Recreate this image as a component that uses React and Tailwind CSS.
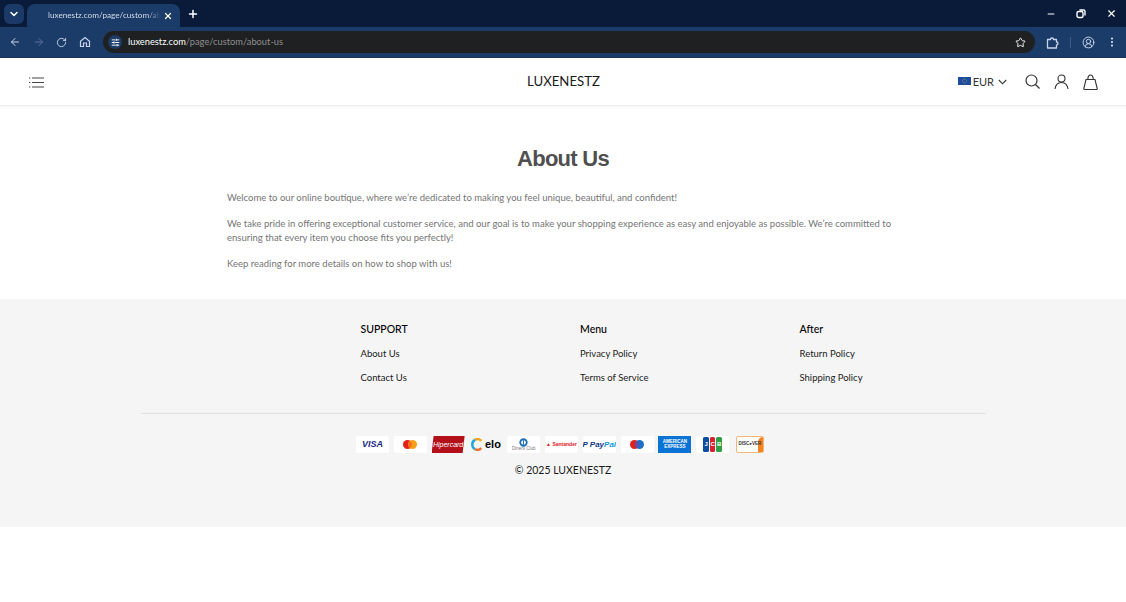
import React from "react";
import { ChevronDown, X, Plus, ArrowLeft, ArrowRight, RotateCw, Star, CircleUserRound, EllipsisVertical, Minus, SlidersHorizontal } from "lucide-react";

const avenir = "font-['Lato','Noto_Sans',sans-serif]";

function Badge({ children, className = "bg-white" }) {
  return <div className={`w-[33px] h-[17px] rounded-[2px] flex items-center justify-center overflow-hidden shrink-0 ${className}`}>{children}</div>;
}

function Cards() {
  return (
    <div className="flex gap-[4.8px] justify-center pr-[3px]">
      <Badge><span className="font-['Liberation_Sans',sans-serif] font-bold italic text-[9px] text-[#1a2a80] leading-none">VISA</span></Badge>
      <Badge>
        <svg width="14" height="9" viewBox="0 0 14 9"><circle cx="4.5" cy="4.5" r="4.5" fill="#e2211c" /><circle cx="9.5" cy="4.5" r="4.5" fill="#f79e1b" /><path d="M7 .9a4.5 4.5 0 0 1 0 7.2a4.5 4.5 0 0 1 0-7.2z" fill="#f26a1b" /></svg>
      </Badge>
      <div className="w-[33px] h-[17px] shrink-0 flex items-center justify-center bg-[#b3101a] [clip-path:polygon(6%_0,100%_0,94%_100%,0_100%)]">
        <span className="font-['Liberation_Sans',sans-serif] italic text-[7px] text-white leading-none">Hipercard</span>
      </div>
      <Badge className="bg-[#f5f5f5] gap-[1px]">
        <svg width="13" height="13" viewBox="0 0 13 13" fill="none" strokeWidth="2.4" className="shrink-0"><path d="M10.300 2.800A5.200 5.200 0 0 0 4 1.900" stroke="#f6a21c" /><path d="M4 1.900a5.200 5.200 0 0 0 0 9.200" stroke="#1ba7e0" /><path d="M4 11.100a5.200 5.200 0 0 0 6.300-.9" stroke="#f0702c" /></svg>
        <span className="font-['Liberation_Sans',sans-serif] font-bold text-[11px] text-black leading-none">elo</span>
      </Badge>
      <Badge className="bg-white flex-col">
        <svg width="9" height="9" viewBox="0 0 10 10"><circle cx="5" cy="5" r="4.6" fill="#1c70b8" /><circle cx="5" cy="5" r="2.6" fill="#fff" /><rect x="4.5" y="2" width="1" height="6" fill="#1c70b8" /></svg>
        <span className="font-['Liberation_Sans',sans-serif] text-[4.5px] text-[#777] leading-none">Diners Club</span>
      </Badge>
      <Badge><span className="font-['Liberation_Sans',sans-serif] font-bold text-[5px] text-[#e0201c] leading-none">▲ Santander</span></Badge>
      <Badge>
        <span className="font-['Liberation_Sans',sans-serif] font-bold italic text-[8px] leading-none whitespace-nowrap"><span className="text-[#14387f]">P Pay</span><span className="text-[#179bd7]">Pal</span></span>
      </Badge>
      <Badge>
        <svg width="14" height="9" viewBox="0 0 14 9"><circle cx="4.5" cy="4.5" r="4.5" fill="#e2211c" /><circle cx="9.5" cy="4.5" r="4.5" fill="#1b6fc9" /><path d="M7 .9a4.5 4.5 0 0 1 0 7.2a4.5 4.5 0 0 1 0-7.2z" fill="#6c4aa0" /></svg>
      </Badge>
      <Badge className="bg-[#0a74d4] flex-col gap-[1px] rounded-none">
        <span className="font-['Liberation_Sans',sans-serif] font-bold text-[4.5px] text-white leading-none whitespace-nowrap">AMERICAN</span>
        <span className="font-['Liberation_Sans',sans-serif] font-bold text-[4.5px] text-white leading-none whitespace-nowrap">EXPRESS</span>
      </Badge>
      <Badge>
        <div className="flex gap-[1px] h-[15px]">
          <div className="w-[5.5px] rounded-[1.5px] bg-[#0b4ea2] text-white text-[6px] leading-[15px] text-center font-bold font-['Liberation_Sans',sans-serif]">J</div>
          <div className="w-[5.5px] rounded-[1.5px] bg-[#d81f30] text-white text-[6px] leading-[15px] text-center font-bold font-['Liberation_Sans',sans-serif]">C</div>
          <div className="w-[5.5px] rounded-[1.5px] bg-[#2f9e44] text-white text-[6px] leading-[15px] text-center font-bold font-['Liberation_Sans',sans-serif]">B</div>
        </div>
      </Badge>
      <div className="w-[28px] mx-[2.5px] h-[17px] shrink-0 rounded-[2px] border border-[#f8b778] bg-white flex items-center pl-[1px] overflow-hidden relative">
        <div className="absolute right-0 top-0 bottom-0 w-[5px] bg-[#f58220] rounded-tl-[6px]" />
        <span className="relative font-['Liberation_Sans',sans-serif] font-bold text-[4.5px] text-[#333] leading-none whitespace-nowrap">DISC●VER</span>
      </div>
    </div>
  );
}

function FooterCol({ title, links }) {
  return (
    <div>
      <h3 className="text-[10.5px] leading-[18px] text-black font-medium">{title}</h3>
      <ul className="mt-[7px] flex flex-col gap-[5px]">
        {links.map((l) => (
          <li key={l} className="text-[9.5px] leading-[18.5px] text-[#1a1a1a]">{l}</li>
        ))}
      </ul>
    </div>
  );
}

export default function App() {
  return (
    <div className={`min-h-[602px] bg-white flex flex-col ${avenir}`}>
      {/* Tab strip */}
      <div className="h-[27px] bg-[#0a1b3a] flex items-end text-white">
        <div className="w-[20px] h-[20px] mb-[3px] ml-[4px] rounded-[6px] bg-[#1b3a68] flex items-center justify-center">
          <ChevronDown size={12} strokeWidth={3} />
        </div>
        <div className="w-[153px] h-[23px] ml-[3px] bg-[#1b3b69] rounded-t-[8px] flex items-center pl-[21px] pr-[7px]">
          <span className="whitespace-nowrap text-[8.2px] leading-none bg-gradient-to-r from-[#e4e9f2] from-[88%] to-[#1b3b69] bg-clip-text text-transparent">luxenestz.com/page/custom/ab</span>
          <div className="flex-1" />
          <X size={10} strokeWidth={3} className="shrink-0" />
        </div>
        <Plus size={12} strokeWidth={3} className="ml-[7px] mb-[7px]" />
        <div className="flex-1" />
        <div className="flex items-center gap-[20px] pr-[9.5px] mb-[8px]">
          <Minus size={10} strokeWidth={2.5} />
          <svg width="10" height="10" viewBox="0 0 10 10" fill="none" stroke="currentColor" strokeWidth="1.4"><rect x="1" y="2.5" width="6" height="6" rx="1.5" /><path d="M3.5 1h4a1.5 1.5 0 0 1 1.5 1.5v4" /></svg>
          <X size={11} strokeWidth={2.5} />
        </div>
      </div>
      {/* Toolbar */}
      <div className="h-[31px] bg-[#1b3b69] flex items-center text-[#c9d6ea] border-b border-[#16315a]">
        <div className="w-[103px] flex items-center shrink-0 pl-[9px] gap-[11.5px]">
          <ArrowLeft size={12} strokeWidth={2} />
          <ArrowRight size={12} strokeWidth={2} className="text-[#5a7299]" />
          <RotateCw size={11} strokeWidth={2} />
          <svg width="12" height="12" viewBox="0 0 12 12" fill="none" stroke="currentColor" strokeWidth="1.2"><path d="M1.5 5.2 6 1.500l4.500 3.700V10.500H7.500V7h-3v3.500H1.500z" /></svg>
        </div>
        <div className="w-[932px] h-[22px] rounded-full bg-[#1f2021] flex items-center pl-[5px] pr-[9px] shrink-0">
          <div className="w-[14px] h-[14px] rounded-full bg-[#1b3b69] flex items-center justify-center text-white">
            <SlidersHorizontal size={9} strokeWidth={2.5} />
          </div>
          <span className="ml-[6px] text-[9.3px] leading-none text-[#8e8f91] whitespace-nowrap"><span className="text-white">luxenestz.com</span>/page/custom/about-us</span>
          <div className="flex-1" />
          <Star size={11} strokeWidth={2} className="text-white" />
        </div>
        <div className="flex-1 flex items-center pl-[11px]">
          <svg width="13" height="13" viewBox="0 0 13 13" fill="none" stroke="currentColor" strokeWidth="1.3" strokeLinejoin="round"><path d="M1.500 3.500h3a1.500 1.500 0 0 1 3 0h3v2.500a1.500 1.500 0 0 1 0 3v3h-9z" /></svg>
          <div className="w-px h-[11px] bg-[#3e5c8a] ml-[11px]" />
          <CircleUserRound size={13} strokeWidth={1.8} className="ml-[11px]" />
          <EllipsisVertical size={12} strokeWidth={2.5} className="ml-[10.5px]" />
        </div>
      </div>
      {/* Header */}
      <header className="h-[48px] bg-white border-b border-[#eeeeee] shadow-[0_1px_2px_rgba(0,0,0,0.05)] grid grid-cols-[1fr_auto_1fr] items-center pl-[29px] pr-[28px] relative z-10">
        <svg width="15" height="11" viewBox="0 0 15 11" fill="none" stroke="#444" strokeWidth="1.1" className="mt-[1px]"><path d="M3 1h12M3 5.500h12M3 10h12M0 1h1.300M0 5.500h1.300M0 10h1.300" /></svg>
        <div className="text-[13.2px] text-[#1a1a1a] mt-[1px]">LUXENESTZ</div>
        <div className="flex items-center justify-end">
          <svg width="13" height="8" viewBox="0 0 13 8" className="mr-[2px] -mt-[1px]"><rect width="13" height="8" fill="#1c4ba0" /><circle cx="6.5" cy="4" r="2" fill="none" stroke="#f2c230" strokeWidth="0.6" strokeDasharray="0.6 0.6" /></svg>
          <span className="text-[11px] leading-none text-[#333]">EUR</span>
          <svg width="9" height="6" viewBox="0 0 9 6" fill="none" stroke="#333" strokeWidth="1.1" className="ml-[3.5px]"><path d="M.8 1 4.500 4.800 8.200 1" /></svg>
          <svg width="15" height="15" viewBox="0 0 15 15" fill="none" stroke="#333" strokeWidth="1.2" className="ml-[18.5px]"><circle cx="6.500" cy="6.500" r="5.500" /><path d="m10.500 10.500 4 4" /></svg>
          <svg width="15" height="16" viewBox="0 0 15 16" fill="none" stroke="#333" strokeWidth="1.1" className="ml-[14px]"><circle cx="7.500" cy="4.500" r="3.500" /><path d="M1 15c.5-4 3-6.500 6.500-6.500S13.500 11 14 15" /></svg>
          <svg width="15" height="16" viewBox="0 0 15 16" fill="none" stroke="#333" strokeWidth="1.1" className="ml-[14px]"><path d="M3 5.500h9L14.200 14.500a.8.8 0 0 1-.8 1H1.600a.8.8 0 0 1-.8-1zM4.800 5.500C4.800 2.500 6 1 7.500 1s2.700 1.500 2.700 4.500" /></svg>
        </div>
      </header>
      {/* Main */}
      <main className="h-[193px] bg-white pt-[41px]">
        <div className="w-[672px] mx-auto">
          <h1 className="font-['Liberation_Sans',sans-serif] font-bold text-[22px] tracking-[-0.75px] leading-[24px] text-[#4f4f4f] text-center">About Us</h1>
          <div className="mt-[20px] text-[9.53px] leading-[13.2px] text-[#757575] flex flex-col gap-[13.2px]">
            <p>Welcome to our online boutique, where we’re dedicated to making you feel unique, beautiful, and confident!</p>
            <p>We take pride in offering exceptional customer service, and our goal is to make your shopping experience as easy and enjoyable as possible. We’re committed to ensuring that every item you choose fits you perfectly!</p>
            <p>Keep reading for more details on how to shop with us!</p>
          </div>
        </div>
      </main>
      {/* Footer */}
      <footer className="h-[228px] bg-[#f5f5f5] pt-[21px]">
        <div className="w-[845px] mx-auto">
          <div className="grid grid-cols-[219.5px_219.5px_1fr] pl-[220px] h-[93px]">
            <FooterCol title="SUPPORT" links={["About Us", "Contact Us"]} />
            <FooterCol title="Menu" links={["Privacy Policy", "Terms of Service"]} />
            <FooterCol title="After" links={["Return Policy", "Shipping Policy"]} />
          </div>
          <div className="h-px bg-[#dfdfdf]" />
          <div className="mt-[22px]"><Cards /></div>
          <p className="mt-[8px] text-center text-[10.5px] leading-[18px] text-[#1a1a1a]">© 2025 LUXENESTZ</p>
        </div>
      </footer>
      <div className="flex-1 bg-white" />
    </div>
  );
}
